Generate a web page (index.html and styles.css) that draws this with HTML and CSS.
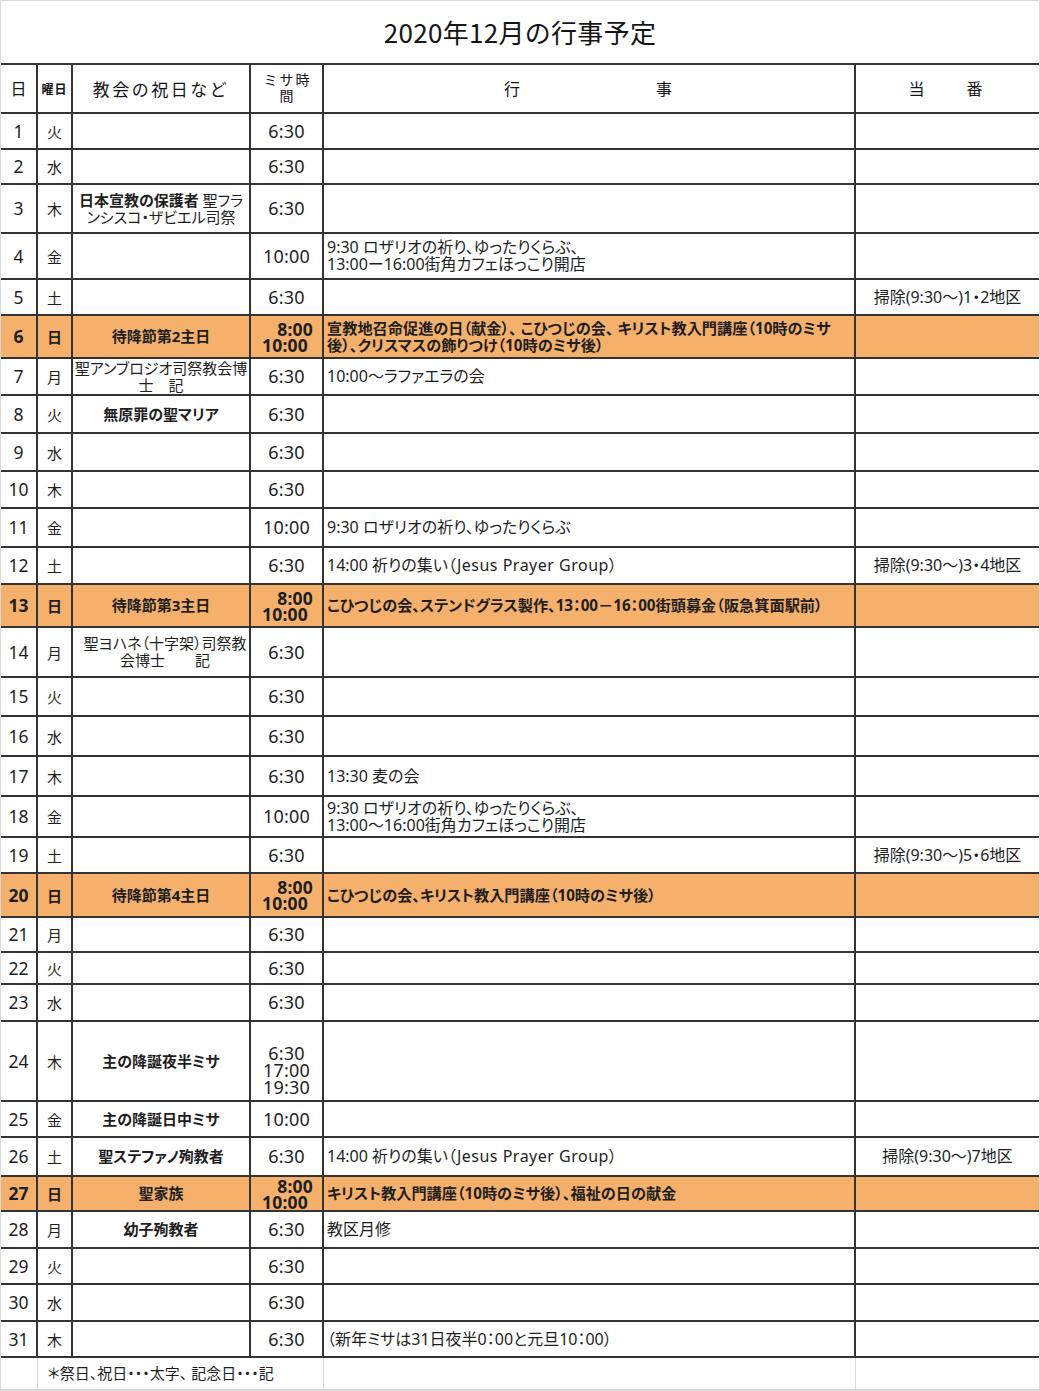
FILE: index.html
```html
<!DOCTYPE html>
<html lang="ja">
<head>
<meta charset="utf-8">
<title>2020年12月の行事予定</title>
<link rel="stylesheet" href="styles.css">
</head>
<body>
<div class="sheet">
  <div class="title">2020年12月の行事予定</div>
  <table class="sched">
    <colgroup>
      <col class="c-day"><col class="c-wd"><col class="c-hol"><col class="c-time"><col class="c-ev"><col class="c-duty">
    </colgroup>
    <thead>
      <tr class="h49 head">
        <th class="hd-day">日</th>
        <th class="hd-wd">曜日</th>
        <th class="hd-hol">教会の祝日など</th>
        <th class="hd-time">ミサ時<br>間</th>
        <th class="hd-ev"><span class="spread ev-spread"><span>行</span><span>事</span></span></th>
        <th class="hd-duty"><span class="spread duty-spread"><span>当</span><span>番</span></span></th>
      </tr>
    </thead>
    <tbody>
      <tr class="h36"><td class="day">1</td><td class="wd">火</td><td class="hol"></td><td class="time">6:30</td><td class="ev"></td><td class="duty"></td></tr>
      <tr class="h35"><td class="day">2</td><td class="wd">水</td><td class="hol"></td><td class="time">6:30</td><td class="ev"></td><td class="duty"></td></tr>
      <tr class="h49"><td class="day">3</td><td class="wd">木</td><td class="hol"><b>日本宣教の保護者</b> 聖フラ<br>ンシスコ・ザビエル司祭</td><td class="time">6:30</td><td class="ev"></td><td class="duty"></td></tr>
      <tr class="h46"><td class="day">4</td><td class="wd">金</td><td class="hol"></td><td class="time">10:00</td><td class="ev">9:30 ロザリオの祈り、ゆったりくらぶ、<br>13:00ー16:00街角カフェほっこり開店</td><td class="duty"></td></tr>
      <tr class="h36"><td class="day">5</td><td class="wd">土</td><td class="hol"></td><td class="time">6:30</td><td class="ev"></td><td class="duty">掃除(9:30～)1・2地区</td></tr>
      <tr class="h43 sun"><td class="day">6</td><td class="wd">日</td><td class="hol">待降節第2主日</td><td class="time two"><span class="t8">8:00</span><span class="t10">10:00</span></td><td class="ev">宣教地召命促進の日（献金）、 こひつじの会、 キリスト教入門講座（10時のミサ<br>後）、クリスマスの飾りつけ（10時のミサ後）</td><td class="duty"></td></tr>
      <tr class="h37"><td class="day">7</td><td class="wd">月</td><td class="hol">聖アンブロジオ司祭教会博<br>士　記</td><td class="time">6:30</td><td class="ev">10:00～ラファエラの会</td><td class="duty"></td></tr>
      <tr class="h38"><td class="day">8</td><td class="wd">火</td><td class="hol"><b>無原罪の聖マリア</b></td><td class="time">6:30</td><td class="ev"></td><td class="duty"></td></tr>
      <tr class="h38"><td class="day">9</td><td class="wd">水</td><td class="hol"></td><td class="time">6:30</td><td class="ev"></td><td class="duty"></td></tr>
      <tr class="h37"><td class="day">10</td><td class="wd">木</td><td class="hol"></td><td class="time">6:30</td><td class="ev"></td><td class="duty"></td></tr>
      <tr class="h39"><td class="day">11</td><td class="wd">金</td><td class="hol"></td><td class="time">10:00</td><td class="ev">9:30 ロザリオの祈り、ゆったりくらぶ</td><td class="duty"></td></tr>
      <tr class="h37"><td class="day">12</td><td class="wd">土</td><td class="hol"></td><td class="time">6:30</td><td class="ev">14:00 祈りの集い（<span class="lat">Jesus Prayer Group</span>）</td><td class="duty">掃除(9:30～)3・4地区</td></tr>
      <tr class="h43 sun"><td class="day">13</td><td class="wd">日</td><td class="hol">待降節第3主日</td><td class="time two"><span class="t8">8:00</span><span class="t10">10:00</span></td><td class="ev">こひつじの会、ステンドグラス製作、13：00－16：00街頭募金（阪急箕面駅前）</td><td class="duty"></td></tr>
      <tr class="h50"><td class="day">14</td><td class="wd">月</td><td class="hol wide">聖ヨハネ（十字架）司祭教<br>会博士　　記</td><td class="time">6:30</td><td class="ev"></td><td class="duty"></td></tr>
      <tr class="h39"><td class="day">15</td><td class="wd">火</td><td class="hol"></td><td class="time">6:30</td><td class="ev"></td><td class="duty"></td></tr>
      <tr class="h40"><td class="day">16</td><td class="wd">水</td><td class="hol"></td><td class="time">6:30</td><td class="ev"></td><td class="duty"></td></tr>
      <tr class="h40"><td class="day">17</td><td class="wd">木</td><td class="hol"></td><td class="time">6:30</td><td class="ev">13:30 麦の会</td><td class="duty"></td></tr>
      <tr class="h41"><td class="day">18</td><td class="wd">金</td><td class="hol"></td><td class="time">10:00</td><td class="ev">9:30 ロザリオの祈り、ゆったりくらぶ、<br>13:00～16:00街角カフェほっこり開店</td><td class="duty"></td></tr>
      <tr class="h36"><td class="day">19</td><td class="wd">土</td><td class="hol"></td><td class="time">6:30</td><td class="ev"></td><td class="duty">掃除(9:30～)5・6地区</td></tr>
      <tr class="h44 sun"><td class="day">20</td><td class="wd">日</td><td class="hol">待降節第4主日</td><td class="time two"><span class="t8">8:00</span><span class="t10">10:00</span></td><td class="ev">こひつじの会、キリスト教入門講座（10時のミサ後）</td><td class="duty"></td></tr>
      <tr class="h35"><td class="day">21</td><td class="wd">月</td><td class="hol"></td><td class="time">6:30</td><td class="ev"></td><td class="duty"></td></tr>
      <tr class="h32"><td class="day">22</td><td class="wd">火</td><td class="hol"></td><td class="time">6:30</td><td class="ev"></td><td class="duty"></td></tr>
      <tr class="h37"><td class="day">23</td><td class="wd">水</td><td class="hol"></td><td class="time">6:30</td><td class="ev"></td><td class="duty"></td></tr>
      <tr class="h80"><td class="day">24</td><td class="wd">木</td><td class="hol"><b>主の降誕夜半ミサ</b></td><td class="time three">6:30<br>17:00<br>19:30</td><td class="ev"></td><td class="duty"></td></tr>
      <tr class="h36"><td class="day">25</td><td class="wd">金</td><td class="hol"><b>主の降誕日中ミサ</b></td><td class="time">10:00</td><td class="ev"></td><td class="duty"></td></tr>
      <tr class="h39"><td class="day">26</td><td class="wd">土</td><td class="hol"><b>聖ステファノ殉教者</b></td><td class="time">6:30</td><td class="ev">14:00 祈りの集い（<span class="lat">Jesus Prayer Group</span>）</td><td class="duty">掃除(9:30～)7地区</td></tr>
      <tr class="h35 sun"><td class="day">27</td><td class="wd">日</td><td class="hol">聖家族</td><td class="time two"><span class="t8">8:00</span><span class="t10">10:00</span></td><td class="ev">キリスト教入門講座（10時のミサ後）、福祉の日の献金</td><td class="duty"></td></tr>
      <tr class="h37"><td class="day">28</td><td class="wd">月</td><td class="hol"><b>幼子殉教者</b></td><td class="time">6:30</td><td class="ev">教区月修</td><td class="duty"></td></tr>
      <tr class="h36"><td class="day">29</td><td class="wd">火</td><td class="hol"></td><td class="time">6:30</td><td class="ev"></td><td class="duty"></td></tr>
      <tr class="h37"><td class="day">30</td><td class="wd">水</td><td class="hol"></td><td class="time">6:30</td><td class="ev"></td><td class="duty"></td></tr>
      <tr class="h36"><td class="day">31</td><td class="wd">木</td><td class="hol"></td><td class="time">6:30</td><td class="ev">（新年ミサは31日夜半0：00と元旦10：00）</td><td class="duty"></td></tr>
      <tr class="h32 foot"><td></td><td colspan="3" class="note">＊祭日、祝日・・・太字、 記念日・・・記</td><td></td><td></td></tr>
    </tbody>
  </table>
</div>
</body>
</html>
```
FILE: styles.css
```css
* { box-sizing: border-box; }

body {
  margin: 0;
  background: #ffffff;
  font-family: "Noto Sans", "Noto Sans CJK JP", sans-serif;
  color: #1e1e1e;
}

.sheet {
  width: 1040px;
  height: 1391px;
  border: 1px solid #d8d8d8;
  overflow: hidden;
}

.title {
  height: 62px;
  display: flex;
  align-items: center;
  justify-content: center;
  font-family: "Noto Sans CJK JP", sans-serif;
  font-size: 26px;
  letter-spacing: 0.3px;
  padding-bottom: 2px;
  color: #151515;
}

.sched {
  width: 1038px;
  border-collapse: collapse;
  table-layout: fixed;
}

.c-day { width: 36px; }
.c-wd { width: 35px; }
.c-hol { width: 178px; }
.c-time { width: 73px; }
.c-ev { width: 532px; }
.c-duty { width: 184px; }

.sched th,
.sched td {
  border: 2px solid #333333;
  padding: 0;
  text-align: center;
  vertical-align: middle;
  font-weight: 400;
  line-height: 17px;
}

.sched tr > :first-child { border-left: none; }
.sched tr > :last-child { border-right: none; }

/* row heights */
.h32 { height: 32px; }
.h35 { height: 35px; }
.h36 { height: 36px; }
.h37 { height: 37px; }
.h38 { height: 38px; }
.h39 { height: 39px; }
.h40 { height: 40px; }
.h41 { height: 41px; }
.h43 { height: 43px; }
.h44 { height: 44px; }
.h46 { height: 46px; }
.h49 { height: 49px; }
.h50 { height: 50px; }
.h80 { height: 80px; }

/* header */
.head th { font-family: "Noto Sans CJK JP", sans-serif; color: #151515; }
.hd-day { font-size: 16px; }
.hd-wd { font-size: 12px; font-weight: 700 !important; letter-spacing: 1px; }
.hd-hol { font-size: 17px; letter-spacing: 2.5px; }
.hd-time { font-size: 14px; letter-spacing: 2px; line-height: 16px !important; padding-left: 2px !important; padding-bottom: 3px !important; }
.hd-ev, .hd-duty { font-size: 16px; }
.spread { display: inline-flex; }
.ev-spread { gap: 136px; margin-left: -2px; }
.duty-spread { gap: 42px; margin-left: -4px; }

/* body cells */
.day { font-size: 17.5px; }
.wd { font-size: 15px; font-family: "Noto Sans CJK JP", sans-serif; }
.hol {
  font-size: 15px;
  font-feature-settings: "palt";
  white-space: nowrap;
}
.hol.wide { padding-left: 8px; }
.hol b { font-weight: 700; }
.time { font-size: 18px; letter-spacing: 0.2px; }
.time.three { padding-top: 19px; }
.time.two { line-height: 16px; font-size: 17.5px; }
.time.two span { display: block; text-align: right; }
.time.two .t8 { padding-right: 9px; }
.time.two .t10 { padding-right: 14px; }
.ev {
  font-size: 16px;
  text-align: left !important;
  padding-left: 3px !important;
  font-feature-settings: "palt";
  white-space: nowrap;
}
.ev .lat { letter-spacing: 0.5px; margin-left: 1px; }
.sun .ev { font-size: 15.2px; }
.duty { font-size: 16px; font-feature-settings: "palt"; white-space: nowrap; }

/* Sunday rows */
.sun td { background: #f5b06b; font-weight: 700; }

/* footer row */
.foot td { border-color: #d8d8d8; border-width: 1px; }
.foot .note {
  text-align: left;
  padding-left: 10px;
  font-size: 15px;
  font-feature-settings: "palt";
  white-space: nowrap;
}
```
